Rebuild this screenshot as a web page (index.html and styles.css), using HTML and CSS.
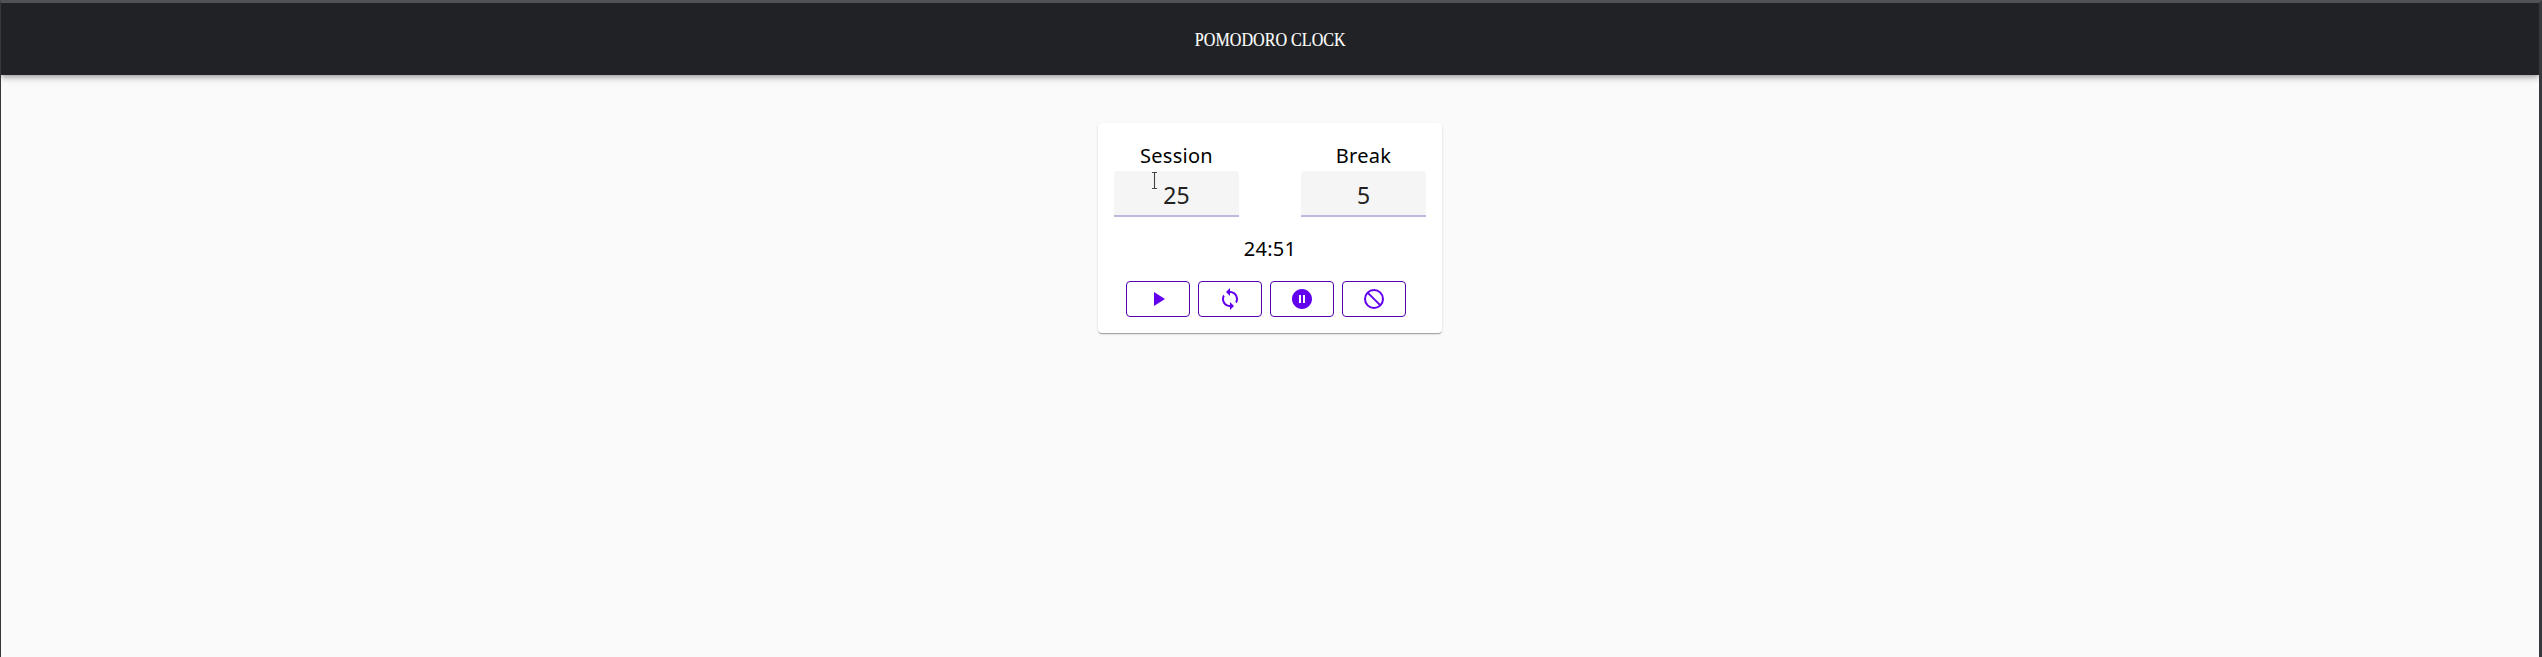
FILE: index.html
```html
<!DOCTYPE html>
<html lang="en">
<head>
<meta charset="utf-8">
<title>Pomodoro Clock</title>
<link rel="stylesheet" href="styles.css">
</head>
<body>
<header class="app-bar"><h1 class="title">POMODORO CLOCK</h1></header>
<main class="main">
  <section class="card">
    <div class="fields">
      <div class="field"><label class="label" for="session">Session</label><input class="input" id="session" value="25"></div>
      <div class="field"><label class="label" for="break">Break</label><input class="input" id="break" value="5"></div>
    </div>
    <div class="time">24:51</div>
    <div class="actions">
      <button class="btn" aria-label="Start"><svg class="icon" viewBox="0 0 24 24"><path d="M8 5v14l11-7z"/></svg></button>
      <button class="btn" aria-label="Restart"><svg class="icon" viewBox="0 0 24 24"><path d="M12 4V1L8 5l4 4V6c3.310 0 6 2.690 6 6 0 1.010-.25 1.970-.7 2.800l1.460 1.460C19.540 15.030 20 13.570 20 12c0-4.420-3.580-8-8-8zm0 14c-3.310 0-6-2.690-6-6 0-1.010.25-1.970.7-2.800L5.240 7.740C4.460 8.970 4 10.430 4 12c0 4.420 3.580 8 8 8v3l4-4-4-4v3z"/></svg></button>
      <button class="btn" aria-label="Pause"><svg class="icon" viewBox="0 0 24 24"><path d="M12 2C6.480 2 2 6.480 2 12s4.480 10 10 10 10-4.480 10-10S17.520 2 12 2zm-1 14H9V8h2v8zm4 0h-2V8h2v8z"/></svg></button>
      <button class="btn" aria-label="Stop"><svg class="icon icon-stop" viewBox="0 0 24 24"><circle cx="12" cy="12" r="9"/><path d="M5.600 5.600l12.800 12.800"/></svg></button>
    </div>
  </section>
</main>
<svg class="cursor" viewBox="0 0 9 20"><path class="cursor-halo" d="M2 1.500h5M4.500 1.500v16M2 17.500h5"/><path class="cursor-line" d="M2 1.500h5M4.500 1.500v16M2 17.500h5"/></svg>
</body>
</html>
```
FILE: styles.css
```css
* { box-sizing: border-box; }
body {
  margin: 0;
  height: 657px;
  overflow: hidden;
  background: #fafafa;
  border-top: 3px solid #505256;
  border-left: 1px solid #35373d;
  border-right: 3px solid #35383d;
  font-family: "Noto Sans", sans-serif;
}
.app-bar {
  display: flex;
  justify-content: center;
  height: 72px;
  padding-top: 25px;
  background: #202225;
  box-shadow: 0 2px 4px -1px rgba(0,0,0,.2), 0 4px 5px rgba(0,0,0,.14), 0 1px 10px rgba(0,0,0,.12);
}
.title {
  margin: 0;
  font: 400 18px/24px "Liberation Serif", serif;
  color: #fff;
  -webkit-text-stroke: .15px #fff;
  transform: scaleX(.895);
}
.main { display: flex; justify-content: center; padding-top: 48px; }
.card {
  width: 344px;
  height: 210px;
  padding: 16px;
  background: #fff;
  border-radius: 4px;
  box-shadow: 0 2px 1px -1px rgba(0,0,0,.2), 0 1px 1px rgba(0,0,0,.14), 0 1px 3px rgba(0,0,0,.12);
}
.fields { display: flex; justify-content: space-between; }
.field { display: flex; flex-direction: column; width: 125px; }
.label, .time {
  height: 32px;
  font-size: 20px;
  line-height: 32px;
  letter-spacing: .25px;
  text-align: center;
  color: #000;
}
.label { line-height: 34px; }
.input {
  width: 100%;
  height: 46px;
  padding: 4px 0 0;
  border: 0;
  border-bottom: 2px solid #beb8dd;
  border-radius: 4px 4px 0 0;
  background: #f5f5f5;
  font: 23px "Noto Sans", sans-serif;
  text-align: center;
  color: #212121;
}
.time { margin-top: 16px; }
.actions { display: flex; gap: 8px; margin: 16px 0 0 12px; }
.btn {
  display: flex;
  align-items: center;
  justify-content: center;
  width: 64px;
  height: 36px;
  padding: 0;
  border: 1px solid #5200ae;
  border-radius: 4px;
  background: #fff;
}
.icon { width: 24px; height: 24px; fill: #6200ee; }
.icon-stop { fill: none; stroke: #6200ee; stroke-width: 2; }
.cursor { position: absolute; left: 1150px; top: 171px; width: 9px; height: 20px; fill: none; }
.cursor-halo { stroke: #fff; stroke-width: 3; }
.cursor-line { stroke: #444; stroke-width: 1.2; }
```
